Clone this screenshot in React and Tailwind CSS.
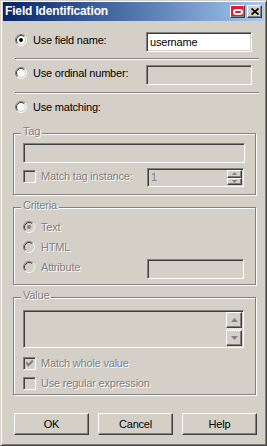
import React from 'react';

const SUNKEN =
  'border border-t-[#808080] border-l-[#808080] border-r-white border-b-white shadow-[inset_1px_1px_0_#404040,inset_-1px_-1px_0_#d4d0c8]';
const RAISED =
  'border border-t-white border-l-white border-r-[#404040] border-b-[#404040] shadow-[inset_-1px_-1px_0_#808080]';
const ETCHED = 'border border-[#808080] shadow-[inset_1px_1px_0_#fff,1px_1px_0_#fff]';
const DIS = 'text-[#808080] [text-shadow:1px_1px_0_#fff]';

const Radio = ({ checked, disabled }) => (
  <svg width="12" height="12" viewBox="0 0 12 12" className="shrink-0">
    <path d="M2.11 9.89A5.5 5.5 0 0 1 9.89 2.11" stroke="#808080" fill="none" />
    <path d="M9.89 2.11A5.5 5.5 0 0 1 2.11 9.89" stroke="#fff" fill="none" />
    <circle cx="6" cy="6" r="4.5" fill={disabled ? '#d4d0c8' : '#fff'} />
    <path d="M2.82 9.18A4.5 4.5 0 0 1 9.18 2.82" stroke="#404040" fill="none" />
    <path d="M9.18 2.82A4.5 4.5 0 0 1 2.82 9.18" stroke="#d4d0c8" fill="none" />
    {checked && <circle cx="6" cy="6" r="2" fill={disabled ? '#808080' : '#000'} />}
  </svg>
);

const Checkbox = ({ checked }) => (
  <span className={`w-[13px] h-[13px] shrink-0 bg-[#d4d0c8] flex items-center justify-center ${SUNKEN}`}>
    {checked && (
      <svg width="7" height="7" viewBox="0 0 7 7">
        <path d="M0 2.5 L2.5 5 L7 0.5" stroke="#808080" strokeWidth="2.2" fill="none" />
      </svg>
    )}
  </span>
);

const Arrow = ({ up, size = 'small' }) => (
  <svg width={size === 'small' ? 5 : 7} height={size === 'small' ? 3 : 4} viewBox="0 0 7 4">
    <path d={up ? 'M0 4 L3.5 0 L7 4 Z' : 'M0 0 L3.5 4 L7 0 Z'} fill="#808080" />
  </svg>
);

const Group = ({ label, className, children }) => (
  <div className={`relative ml-[10px] w-[243px] ${ETCHED} ${className}`}>
    <span className={`absolute -top-[10px] left-[7px] px-[2px] bg-[#d4d0c8] leading-[14px] ${DIS}`}>
      {label}
    </span>
    {children}
  </div>
);

const Option = ({ label, checked, disabled, className = '' }) => (
  <div className={`flex items-center h-[14px] ${className}`}>
    <Radio checked={checked} disabled={disabled} />
    <span className={`ml-[6px] leading-[14px] ${disabled ? DIS : 'text-black'}`}>{label}</span>
  </div>
);

const Button = ({ children }) => (
  <button className={`w-[75px] h-[22px] bg-[#d4d0c8] text-black ${RAISED}`}>{children}</button>
);

export default function App() {
  return (
    <div className="w-[267px] h-[446px] bg-[#d4d0c8] flex flex-col pt-[1px] px-[2px] pb-[2px] border border-t-[#d4d0c8] border-l-[#d4d0c8] border-r-[#404040] border-b-[#404040] shadow-[inset_1px_1px_0_#fff,inset_-1px_-1px_0_#808080] font-['Liberation_Sans',Arial,sans-serif] text-[11px] tracking-[-0.2px] overflow-hidden">
      {/* title bar */}
      <div className="h-[19px] shrink-0 flex items-center pl-[2px] pr-[2px] bg-linear-to-r from-[#0a246a] to-[#a6caf0]">
        <span className="text-white font-bold text-[12px] tracking-[-0.15px] leading-[19px]">Field Identification</span>
        <span className={`ml-auto w-[15px] h-[13px] bg-[#e8192c] flex items-center justify-center ${RAISED}`}>
          <span className="w-[10px] h-[6px] rounded-full border-2 border-white" />
        </span>
        <span className={`ml-[2px] w-[15px] h-[13px] bg-[#d4d0c8] flex items-center justify-center ${RAISED}`}>
          <svg width="8" height="7" viewBox="0 0 8 7">
            <path d="M0.5 0.5 L7.5 6.5 M7.5 0.5 L0.5 6.5" stroke="#000" strokeWidth="1.7" />
          </svg>
        </span>
      </div>

      {/* use field name */}
      <div className="mt-[11px] flex items-start pl-[12px] pr-[12px]">
        <Option label="Use field name:" checked className="mt-[1px]" />
        <div className={`ml-auto w-[106px] h-[20px] bg-white flex items-center pl-[3px] text-black ${SUNKEN}`}>
          username
        </div>
      </div>
      <div className="mt-[6px] ml-[12px] mr-[5px] h-[2px] border-t border-t-[#808080] border-b border-b-white" />

      {/* ordinal */}
      <div className="mt-[5px] flex items-start pl-[12px] pr-[12px]">
        <Option label="Use ordinal number:" className="mt-[1px]" />
        <div className={`ml-auto w-[106px] h-[20px] bg-[#d4d0c8] ${SUNKEN}`} />
      </div>
      <div className="mt-[7px] ml-[12px] mr-[5px] h-[2px] border-t border-t-[#808080] border-b border-b-white" />

      {/* matching */}
      <div className="mt-[6px] pl-[12px]">
        <Option label="Use matching:" />
      </div>

      {/* Tag */}
      <Group label="Tag" className="mt-[19px] pt-[9px] pl-[9px] pr-[10px] pb-[7px]">
        <div className={`h-[20px] w-full bg-[#d4d0c8] ${SUNKEN}`} />
        <div className="mt-[5px] flex items-start">
          <div className="mt-[1px] h-[14px] flex items-center">
            <Checkbox />
            <span className={`ml-[5px] leading-[14px] ${DIS}`}>Match tag instance:</span>
          </div>
          <div className={`ml-auto mr-[1px] w-[97px] h-[19px] bg-[#d4d0c8] flex items-center ${SUNKEN}`}>
            <span className="pl-[3px] text-[#808080]">1</span>
            <div className="ml-auto mr-[1px] w-[15px] h-[15px] flex flex-col">
              <span className={`flex-1 flex items-center justify-center bg-[#d4d0c8] ${RAISED}`}>
                <Arrow up />
              </span>
              <span className={`flex-1 flex items-center justify-center bg-[#d4d0c8] ${RAISED}`}>
                <Arrow />
              </span>
            </div>
          </div>
        </div>
      </Group>

      {/* Criteria */}
      <Group label="Criteria" className="mt-[12px] pt-[12px] pl-[9px] pr-[10px] pb-[5px]">
        <Option label="Text" checked disabled />
        <Option label="HTML" disabled className="mt-[6px]" />
        <div className="mt-[5px] flex items-start">
          <Option label="Attribute" disabled className="mt-[1px]" />
          <div className={`ml-auto mr-[1px] w-[97px] h-[20px] bg-[#d4d0c8] ${SUNKEN}`} />
        </div>
      </Group>

      {/* Value */}
      <Group label="Value" className="mt-[12px] pt-[12px] pl-[9px] pr-[10px] pb-[4px]">
        <div className={`h-[38px] w-[221px] bg-[#d4d0c8] flex ${SUNKEN}`}>
          <div className="flex-1" />
          <div className="w-[16px] my-[1px] mr-[1px] flex flex-col">
            <span className={`h-[16px] flex items-center justify-center bg-[#d4d0c8] ${RAISED}`}>
              <Arrow up size="big" />
            </span>
            <span className="flex-1 bg-[repeating-conic-gradient(#fff_0_25%,#d4d0c8_0_50%)] bg-[length:2px_2px]" />
            <span className={`h-[16px] flex items-center justify-center bg-[#d4d0c8] ${RAISED}`}>
              <Arrow size="big" />
            </span>
          </div>
        </div>
        <div className="mt-[8px] h-[14px] flex items-center">
          <Checkbox checked />
          <span className={`ml-[5px] leading-[14px] ${DIS}`}>Match whole value</span>
        </div>
        <div className="mt-[6px] h-[14px] flex items-center">
          <Checkbox />
          <span className={`ml-[5px] leading-[14px] ${DIS}`}>Use regular expression</span>
        </div>
      </Group>

      {/* buttons */}
      <div className="mt-[18px] ml-[11px] flex gap-[9px]">
        <Button>OK</Button>
        <Button>Cancel</Button>
        <Button>Help</Button>
      </div>
    </div>
  );
}
